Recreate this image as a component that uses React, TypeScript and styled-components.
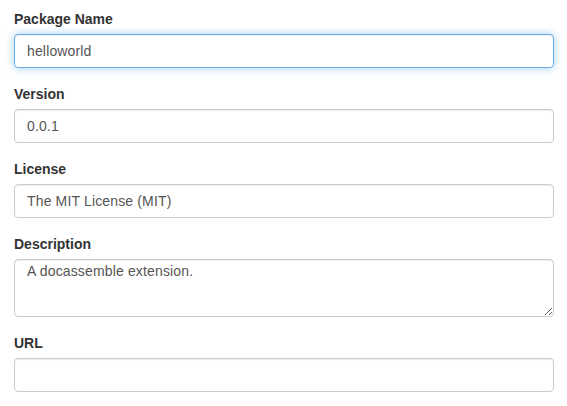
import React from 'react';
import styled, { createGlobalStyle, css } from 'styled-components';

const GlobalStyle = createGlobalStyle`
  html, body {
    margin: 0;
    padding: 0;
    background: #fff;
  }
  body {
    font-family: 'Liberation Sans', Arial, sans-serif;
    font-size: 14px;
    line-height: 1.5;
    color: #333;
  }
  * {
    box-sizing: border-box;
  }
`;

const Form = styled.form`
  padding: 8px 13px 0 14px;
`;

const Group = styled.div`
  margin-bottom: 15px;
`;

const Label = styled.label`
  display: block;
  font-weight: 700;
  font-size: 14px;
  line-height: 20px;
  padding-top: 1px;
  margin-bottom: 5px;
  color: #333;
`;

const field = css<{ $focused?: boolean }>`
  display: block;
  width: 100%;
  padding: 6px 12px;
  font-family: 'Liberation Sans', Arial, sans-serif;
  font-size: 14px;
  line-height: 20px;
  letter-spacing: 0.15px;
  color: #555;
  background: #fff;
  border: 1px solid #ccc;
  border-radius: 4px;
  box-shadow: inset 0 1px 1px rgba(0, 0, 0, 0.075);
  outline: none;
  ${(p) =>
    p.$focused &&
    css`
      border-color: #66afe9;
      box-shadow: inset 0 1px 1px rgba(0, 0, 0, 0.075), 0 0 8px rgba(102, 175, 233, 0.6);
    `}
`;

const Input = styled.input<{ $focused?: boolean }>`
  ${field}
  height: 34px;
`;

const TextArea = styled.textarea<{ $focused?: boolean }>`
  ${field}
  height: 58px;
  padding-top: 1px;
  resize: vertical;
`;

function App() {
  return (
    <>
      <GlobalStyle />
      <Form onSubmit={(e) => e.preventDefault()}>
        <Group>
          <Label>Package Name</Label>
          <Input $focused defaultValue="helloworld" />
        </Group>
        <Group>
          <Label>Version</Label>
          <Input defaultValue="0.0.1" />
        </Group>
        <Group>
          <Label>License</Label>
          <Input defaultValue="The MIT License (MIT)" />
        </Group>
        <Group>
          <Label>Description</Label>
          <TextArea defaultValue="A docassemble extension." />
        </Group>
        <Group>
          <Label>URL</Label>
          <Input defaultValue="" />
        </Group>
      </Form>
    </>
  );
}

export default App;
